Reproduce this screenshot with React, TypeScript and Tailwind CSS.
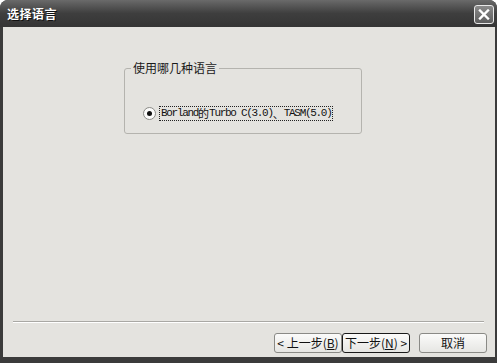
import React from "react";

const cjk = '"Noto Sans CJK SC", "Liberation Sans", sans-serif';

const Btn = ({ children, primary }: { children: React.ReactNode; primary?: boolean }) => (
  <button
    className={
      "w-[68px] h-[20px] flex items-center justify-center text-[12px] leading-none text-[#111] rounded-[3px] bg-gradient-to-b from-[#fbfbfa] to-[#e6e6e3] " +
      (primary ? "border border-[#1a1a1a]" : "border border-[#8a8a86]")
    }
    style={{ fontFamily: cjk }}
  >
    {children}
  </button>
);

export default function App() {
  return (
    <div className="w-[497px] h-[363px] bg-white">
      <div className="w-[497px] h-[363px] flex flex-col bg-[#3b3b3b] rounded-t-[8px] overflow-hidden">
        {/* title bar */}
        <div className="h-[27px] flex items-center justify-between pl-[7px] pr-[3px] bg-gradient-to-b from-[#6a6a6a] via-[#3e3e3e] to-[#353535]">
          <span
            className="text-white text-[12px] font-bold tracking-[0.5px] leading-none [text-shadow:1px_1px_0_#111]"
            style={{ fontFamily: cjk }}
          >
            选择语言
          </span>
          <div className="w-[20px] h-[19px] mt-[2px] rounded-[3px] border border-[#e8e8e8] bg-gradient-to-b from-[#8a8a8a] to-[#5e5e5e] flex items-center justify-center">
            <svg width="12" height="11" viewBox="0 0 12 11">
              <path d="M2 1.5 L10 9.5 M10 1.5 L2 9.5" stroke="white" strokeWidth="2.4" strokeLinecap="square" />
            </svg>
          </div>
        </div>

        {/* body */}
        <div className="flex-1 ml-[3px] mr-[2px] mb-[6px] bg-[#e4e3df] flex flex-col">
          <fieldset className="ml-[121px] mt-[34px] w-[238px] h-[73px] border border-[#b4b3ae] rounded-[3px] px-0">
            <legend
              className="ml-[6px] px-[2px] text-[12px] leading-[14px] text-[#1a1a1a]"
              style={{ fontFamily: cjk }}
            >
              使用哪几种语言
            </legend>
            <div className="mt-[31px] pl-[18px] flex items-center gap-[3px]">
              <span className="w-[13px] h-[13px] rounded-full border border-[#8a8a86] bg-[#fbfbfa] flex items-center justify-center">
                <span className="w-[5px] h-[5px] rounded-full bg-[#111]" />
              </span>
              <span
                className="border border-dotted border-[#222] px-[1px] h-[15px] flex items-center text-[11px] tracking-[-1.3px] text-[#111] whitespace-nowrap"
                style={{ fontFamily: '"Liberation Mono", "Noto Sans CJK SC", monospace' }}
              >
                Borland<span style={{ fontFamily: cjk }} className="tracking-normal">的</span>Turbo C(3.0)<span style={{ fontFamily: cjk }} className="tracking-normal">、</span>TASM(5.0)
              </span>
            </div>
          </fieldset>

          <div className="flex-1" />

          <div className="mx-[10px] w-[471px] h-[2px] border-t border-[#a9a8a4] border-b-white border-b" />

          <div className="mt-[10px] mb-[4px] pr-[8px] flex justify-end items-center">
            <Btn>
              &lt; 上一步(<u>B</u>)
            </Btn>
            <Btn primary>
              下一步(<u>N</u>) &gt;
            </Btn>
            <div className="w-[9px]" />
            <Btn>取消</Btn>
          </div>
        </div>
      </div>
    </div>
  );
}
